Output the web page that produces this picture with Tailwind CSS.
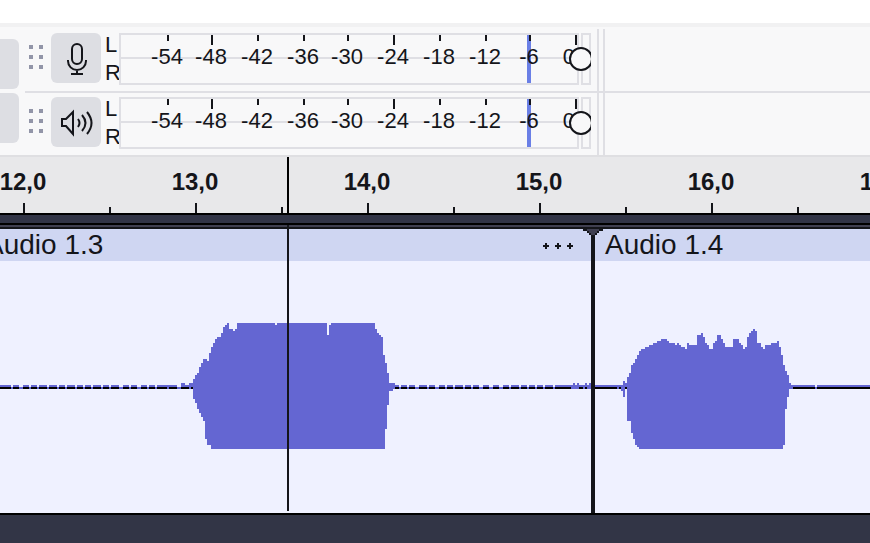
<!DOCTYPE html>
<html lang="en">
<head>
    <meta charset="UTF-8">
    <meta name="viewport" content="width=device-width, initial-scale=1.0">
    <title>Audio editor</title>
    <script src="https://cdn.jsdelivr.net/npm/@tailwindcss/browser@4"></script>
</head>
<body class="min-h-screen flex flex-col overflow-hidden bg-[#323546] text-[#14151a] font-['Liberation_Sans',Arial,sans-serif]">
    <header class="bg-[#f8f8f9] border-b-2 border-[#dfdfe2]">
        <div class="h-[23px] bg-white"></div>
        <div class="h-1 bg-[#f1f1f2]"></div>
        <div class="flex">
            <div class="w-[25px] shrink-0 flex flex-col gap-1 pt-3">
                <button type="button" aria-label="Tool" class="w-[19px] h-[50px] rounded-r-md bg-[#dddee3]"></button>
                <button type="button" aria-label="Tool" class="w-[19px] h-[50px] rounded-r-md bg-[#dddee3]"></button>
            </div>
            <div class="flex-1 min-w-0">
                <!-- Recording meter -->
                <div class="flex border-b-2 border-[#dfdfe4]">
                    <div class="flex pl-1 py-1.5">
                        <svg class="w-3.5 h-6 mt-3 mr-2" viewBox="0 0 14 24" fill="#9295a8" aria-hidden="true">
                            <path d="M0 0h4v4h-4zM10 0h4v4h-4zM0 10h4v4h-4zM10 10h4v4h-4zM0 20h4v4h-4zM10 20h4v4h-4z"/>
                        </svg>
                        <button type="button" aria-label="Record meter" class="size-[50px] rounded-md bg-[#dddee3]">
                            <svg class="size-full" viewBox="0 0 50 50" fill="none" stroke="#14151a" stroke-width="2">
                                <rect x="21" y="11" width="10" height="20" rx="5"/>
                                <path d="M17 27v1a9 9 0 0 0 18 0v-1M26 37v4M20 41h12"/>
                            </svg>
                        </button>
                        <div class="w-[18px] pl-1 -my-0.5 text-[22px] leading-7">
                            <div>L</div>
                            <div>R</div>
                        </div>
                        <div class="relative flex gap-0.5 w-[472px] h-[52px] overflow-hidden bg-[#f8f8f9]">
                            <div class="relative w-[460px] border-2 border-[#dfdfe4]">
                                <div class="absolute inset-x-0 top-[22px] h-0.5 bg-[#dfdfe4]"></div>
                                <div class="absolute left-[406px] inset-y-0 w-1 bg-[#6a7fe6]"></div>
                                <div class="relative ml-[46px] grid grid-cols-[44px_46px_46px_44px_46px_46px_46px_44px_46px_2px] text-[22px] leading-6">
                                    <div class="w-0.5 flex flex-col items-center"><i class="w-0.5 h-1.5 mb-1 bg-[#14151a]"></i><span class="pr-0.5">-54</span></div>
                                    <div class="w-0.5 flex flex-col items-center"><i class="w-0.5 h-2.5 bg-[#14151a]"></i><span class="pr-0.5">-48</span></div>
                                    <div class="w-0.5 flex flex-col items-center"><i class="w-0.5 h-1.5 mb-1 bg-[#14151a]"></i><span class="pr-0.5">-42</span></div>
                                    <div class="w-0.5 flex flex-col items-center"><i class="w-0.5 h-1.5 mb-1 bg-[#14151a]"></i><span class="pr-0.5">-36</span></div>
                                    <div class="w-0.5 flex flex-col items-center"><i class="w-0.5 h-1.5 mb-1 bg-[#14151a]"></i><span class="pr-0.5">-30</span></div>
                                    <div class="w-0.5 flex flex-col items-center"><i class="w-0.5 h-2.5 bg-[#14151a]"></i><span class="pr-0.5">-24</span></div>
                                    <div class="w-0.5 flex flex-col items-center"><i class="w-0.5 h-1.5 mb-1 bg-[#14151a]"></i><span class="pr-0.5">-18</span></div>
                                    <div class="w-0.5 flex flex-col items-center"><i class="w-0.5 h-1.5 mb-1 bg-[#14151a]"></i><span class="pr-0.5">-12</span></div>
                                    <div class="w-0.5 flex flex-col items-center"><i class="w-0.5 h-1.5 mb-1 bg-[#14151a]"></i><span class="pr-0.5">-6</span></div>
                                    <div class="w-0.5 flex flex-col items-end"><i class="w-0.5 h-2.5 bg-[#14151a]"></i><span class="pr-0.5">0</span></div>
                                </div>
                            </div>
                            <div class="w-2.5 border-2 border-[#dfdfe4]"></div>
                            <input type="range" min="0" max="100" value="100" aria-label="Recording level" class="absolute left-0 top-0 w-[474px] h-[52px] appearance-none bg-transparent [&::-webkit-slider-thumb]:appearance-none [&::-webkit-slider-thumb]:size-6 [&::-webkit-slider-thumb]:rounded-full [&::-webkit-slider-thumb]:border-2 [&::-webkit-slider-thumb]:border-solid [&::-webkit-slider-thumb]:border-[#14151a] [&::-webkit-slider-thumb]:bg-[#f8f8f9]">
                        </div>
                    </div>
                    <div class="w-2 mt-0.5 ml-[6px] border-x-2 border-[#dfdfe4]"></div>
                </div>
                <!-- Playback meter -->
                <div class="flex">
                    <div class="flex pl-1 pt-1 pb-1.5">
                        <svg class="w-3.5 h-6 mt-3 mr-2" viewBox="0 0 14 24" fill="#9295a8" aria-hidden="true">
                            <path d="M0 0h4v4h-4zM10 0h4v4h-4zM0 10h4v4h-4zM10 10h4v4h-4zM0 20h4v4h-4zM10 20h4v4h-4z"/>
                        </svg>
                        <button type="button" aria-label="Playback meter" class="size-[50px] rounded-md bg-[#dddee3]">
                            <svg class="size-full" viewBox="0 0 50 50" fill="none" stroke="#14151a" stroke-width="2">
                                <path d="M11 22h4l7-7v22l-7-8h-4z"/>
                                <path d="M27 22q3 4 0 8M31 18q7 8 0 16M36 15q9 11 0 22"/>
                            </svg>
                        </button>
                        <div class="w-[18px] pl-1 -my-0.5 text-[22px] leading-7">
                            <div>L</div>
                            <div>R</div>
                        </div>
                        <div class="relative flex gap-0.5 w-[472px] h-[52px] overflow-hidden bg-[#f8f8f9]">
                            <div class="relative w-[460px] border-2 border-[#dfdfe4]">
                                <div class="absolute inset-x-0 top-[22px] h-0.5 bg-[#dfdfe4]"></div>
                                <div class="absolute left-[406px] inset-y-0 w-1 bg-[#6a7fe6]"></div>
                                <div class="relative ml-[46px] grid grid-cols-[44px_46px_46px_44px_46px_46px_46px_44px_46px_2px] text-[22px] leading-6">
                                    <div class="w-0.5 flex flex-col items-center"><i class="w-0.5 h-1.5 mb-1 bg-[#14151a]"></i><span class="pr-0.5">-54</span></div>
                                    <div class="w-0.5 flex flex-col items-center"><i class="w-0.5 h-2.5 bg-[#14151a]"></i><span class="pr-0.5">-48</span></div>
                                    <div class="w-0.5 flex flex-col items-center"><i class="w-0.5 h-1.5 mb-1 bg-[#14151a]"></i><span class="pr-0.5">-42</span></div>
                                    <div class="w-0.5 flex flex-col items-center"><i class="w-0.5 h-1.5 mb-1 bg-[#14151a]"></i><span class="pr-0.5">-36</span></div>
                                    <div class="w-0.5 flex flex-col items-center"><i class="w-0.5 h-1.5 mb-1 bg-[#14151a]"></i><span class="pr-0.5">-30</span></div>
                                    <div class="w-0.5 flex flex-col items-center"><i class="w-0.5 h-2.5 bg-[#14151a]"></i><span class="pr-0.5">-24</span></div>
                                    <div class="w-0.5 flex flex-col items-center"><i class="w-0.5 h-1.5 mb-1 bg-[#14151a]"></i><span class="pr-0.5">-18</span></div>
                                    <div class="w-0.5 flex flex-col items-center"><i class="w-0.5 h-1.5 mb-1 bg-[#14151a]"></i><span class="pr-0.5">-12</span></div>
                                    <div class="w-0.5 flex flex-col items-center"><i class="w-0.5 h-1.5 mb-1 bg-[#14151a]"></i><span class="pr-0.5">-6</span></div>
                                    <div class="w-0.5 flex flex-col items-end"><i class="w-0.5 h-2.5 bg-[#14151a]"></i><span class="pr-0.5">0</span></div>
                                </div>
                            </div>
                            <div class="w-2.5 border-2 border-[#dfdfe4]"></div>
                            <input type="range" min="0" max="100" value="100" aria-label="Playback level" class="absolute left-0 top-0 w-[474px] h-[52px] appearance-none bg-transparent [&::-webkit-slider-thumb]:appearance-none [&::-webkit-slider-thumb]:size-6 [&::-webkit-slider-thumb]:rounded-full [&::-webkit-slider-thumb]:border-2 [&::-webkit-slider-thumb]:border-solid [&::-webkit-slider-thumb]:border-[#14151a] [&::-webkit-slider-thumb]:bg-[#f8f8f9]">
                        </div>
                    </div>
                    <div class="w-2 ml-[6px] border-x-2 border-[#dfdfe4]"></div>
                </div>
            </div>
        </div>
    </header>

    <!-- Timeline ruler: one second = 172px -->
    <div class="relative overflow-hidden bg-[#e8e8ea]">
        <div class="-ml-[63px] flex pt-1 text-2xl leading-[42px] font-bold text-center">
            <span class="w-[172px] shrink-0">12,0</span>
            <span class="w-[172px] shrink-0">13,0</span>
            <span class="w-[172px] shrink-0">14,0</span>
            <span class="w-[172px] shrink-0">15,0</span>
            <span class="w-[172px] shrink-0">16,0</span>
            <span class="w-[172px] shrink-0">17,0</span>
        </div>
        <div class="ml-[23px] flex items-end gap-[84px] h-2.5">
            <i class="w-0.5 h-2.5 shrink-0 bg-[#14151a]"></i>
            <i class="w-0.5 h-1.5 shrink-0 bg-[#14151a]"></i>
            <i class="w-0.5 h-2.5 shrink-0 bg-[#14151a]"></i>
            <i class="w-0.5 h-1.5 shrink-0 bg-[#14151a]"></i>
            <i class="w-0.5 h-2.5 shrink-0 bg-[#14151a]"></i>
            <i class="w-0.5 h-1.5 shrink-0 bg-[#14151a]"></i>
            <i class="w-0.5 h-2.5 shrink-0 bg-[#14151a]"></i>
            <i class="w-0.5 h-1.5 shrink-0 bg-[#14151a]"></i>
            <i class="w-0.5 h-2.5 shrink-0 bg-[#14151a]"></i>
            <i class="w-0.5 h-1.5 shrink-0 bg-[#14151a]"></i>
        </div>
        <div class="absolute left-[287px] inset-y-0 w-0.5 bg-black"></div>
    </div>
    <div class="h-3 border-y-2 border-black bg-[#313446]"></div>

    <!-- Track -->
    <main class="relative border-b-2 border-black">
        <div class="h-1 bg-[#3f3f50] border-b-2 border-[#14151a]"></div>
        <div class="flex bg-[#eff1ff] overflow-hidden">
            <section class="w-[591px] shrink-0">
                <div class="flex items-center justify-between h-8 pr-[18px] bg-[#cfd6f2]">
                    <h2 class="-ml-[15px] text-[28px] leading-8">Audio 1.3</h2>
                    <button type="button" aria-label="Clip menu">
                        <svg class="w-[30px] h-1.5 mt-0.5" viewBox="0 0 30 6" fill="#14151a">
                            <path d="M2 0h2v2h2v2h-2v2h-2v-2h-2v-2h2zM14 0h2v2h2v2h-2v2h-2v-2h-2v-2h2zM26 0h2v2h2v2h-2v2h-2v-2h-2v-2h2z"/>
                        </svg>
                    </button>
                </div>
                <svg class="block w-[591px] h-[252px]" viewBox="0 261 591 252" shape-rendering="crispEdges" aria-label="Waveform of Audio 1.3">
                    <defs>
                        <path id="line" stroke-width="2" d="M0 0H11M13 0H19M23 0H29M31 0H37M39 0H47M49 0H57M59 0H65M67 0H75M77 0H83M85 0H91M93 0H101M103 0H109M111 0H119M123 0H129M131 0H137M141 0H147M149 0H155M157 0H167M169 0H177M181 0H189M191 0H193M395 0H399M401 0H407M409 0H415M419 0H427M429 0H435M439 0H445M447 0H453M455 0H463M465 0H471M473 0H479M483 0H489M493 0H499M503 0H509M511 0H519M521 0H527M529 0H535M537 0H543M545 0H553M555 0H571M579 0H583M585 0H587"/>
                    </defs>
                    <path fill="#6466d2" d="M0 387H591V389H0z"/>
                    <use href="#line" y="386" stroke="#6466d2"/>
                    <use href="#line" y="388" stroke="#000"/>
                    <path fill="#6466d2" d="M167 385h2v2h-2zM181 383h4v4h-4zM185 385h4v-2h4v4h-8zM571 385h20v2h-20zM573 383h2v2h-2zM577 383h2v2h-2zM585 383h2v2h-2zM589 383h2v2h-2z"/>
                    <path fill="#6466d2" d="M193 399V379H195V375H197V373H199V367H201V363H203V359H207V361H209V353H211V347H213V343H215V339H217V337H221V333H223V327H225V325H227V323H229V329H233V331H235V329H237V323H275V325H277V323H327V335H329V325H331V323H375V329H377V333H379V335H381V337H383V355H385V363H387V373H389V383H395V389H393V391H389V405H387V429H385V449H211V445H207V439H205V421H203V417H201V413H199V409H197V403H195V399z"/>
                </svg>
            </section>
            <div class="relative w-1 shrink-0 bg-[#14151a]">
                <svg class="absolute -left-2 top-0 w-5 h-2" viewBox="0 2 20 8" shape-rendering="crispEdges">
                    <path fill="#14151a" d="M0 0h20v4h-4v2h-2v2h-2v2h-4v-2h-2v-2h-2v-2h-4z"/>
                    <path fill="#3f3f50" d="M4 0h12v4h-2v2h-2v2h-4v-2h-2v-2h-2z"/>
                </svg>
            </div>
            <section class="flex-1 min-w-0">
                <div class="flex items-center h-8 pl-2.5 bg-[#cfd6f2]">
                    <h2 class="text-[28px] leading-8">Audio 1.4</h2>
                </div>
                <svg class="block w-[275px] h-[252px]" viewBox="595 261 275 252" shape-rendering="crispEdges" aria-label="Waveform of Audio 1.4">
                    <path fill="#6466d2" d="M595 385H815V387H817V385H870V389H595z"/>
                    <path fill="#000" d="M595 387H617V389H595zM619 387H621V389H619zM793 387H815V389H793zM817 387H870V389H817z"/>
                    <path fill="#6466d2" d="M621 385h2v-4h2v2h2v4h-2v10h-2v-6h-2z"/>
                    <path fill="#000" d="M625 387h2v2h-2z"/>
                    <path fill="#6466d2" d="M627 421V377H629V373H631V365H633V363H635V359H637V355H639V351H641V349H645V347H649V345H653V343H657V341H661V339H667V341H669V343H675V345H677V343H679V345H681V347H685V349H687V343H689V345H697V335H701V333H703V337H705V343H707V345H709V349H713V343H715V341H717V335H721V339H723V343H725V347H733V339H739V343H741V345H743V349H745V347H747V337H749V333H751V331H753V329H755V331H757V343H761V347H763V349H765V345H771V343H777V341H779V347H781V355H783V365H785V371H787V375H789V383H791V389H789V397H787V409H785V445H783V449H639V447H637V445H635V439H633V433H631V421z"/>
                </svg>
            </section>
        </div>
        <div class="absolute left-[287px] top-0 bottom-0.5 w-0.5 bg-[#14151a]"></div>
    </main>
</body>
</html>
